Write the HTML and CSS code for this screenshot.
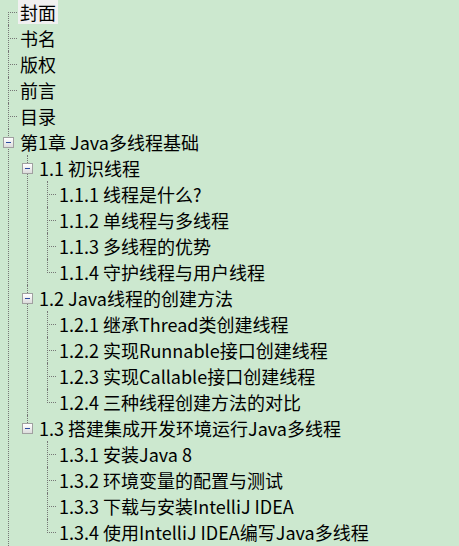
FILE: index.html
```html
<!DOCTYPE html>
<html lang="zh-CN">
<head>
    <meta charset="UTF-8">
    <meta name="viewport" content="width=device-width, initial-scale=1.0">
    <title>目录树</title>
    <link rel="stylesheet" href="styles.css">
</head>
<body>
    <ul class="tree">
        <li><div class="row leaf"><span class="label selected">封面</span></div></li>
        <li><div class="row leaf"><span class="label">书名</span></div></li>
        <li><div class="row leaf"><span class="label">版权</span></div></li>
        <li><div class="row leaf"><span class="label">前言</span></div></li>
        <li><div class="row leaf"><span class="label">目录</span></div></li>
        <li class="more">
            <div class="row"><span class="box"></span><span class="label">第1章 Java多线程基础</span></div>
            <ul class="sub">
                <li>
                    <div class="row"><span class="box"></span><span class="label">1.1 初识线程</span></div>
                    <ul class="sub deep">
                        <li><div class="row leaf"><span class="label">1.1.1 线程是什么?</span></div></li>
                        <li><div class="row leaf"><span class="label">1.1.2 单线程与多线程</span></div></li>
                        <li><div class="row leaf"><span class="label">1.1.3 多线程的优势</span></div></li>
                        <li><div class="row leaf"><span class="label">1.1.4 守护线程与用户线程</span></div></li>
                    </ul>
                </li>
                <li>
                    <div class="row"><span class="box"></span><span class="label">1.2 Java线程的创建方法</span></div>
                    <ul class="sub deep">
                        <li><div class="row leaf"><span class="label">1.2.1 继承Thread类创建线程</span></div></li>
                        <li><div class="row leaf"><span class="label">1.2.2 实现Runnable接口创建线程</span></div></li>
                        <li><div class="row leaf"><span class="label">1.2.3 实现Callable接口创建线程</span></div></li>
                        <li><div class="row leaf"><span class="label">1.2.4 三种线程创建方法的对比</span></div></li>
                    </ul>
                </li>
                <li>
                    <div class="row"><span class="box"></span><span class="label">1.3 搭建集成开发环境运行Java多线程</span></div>
                    <ul class="sub deep">
                        <li><div class="row leaf"><span class="label">1.3.1 安装Java 8</span></div></li>
                        <li><div class="row leaf"><span class="label">1.3.2 环境变量的配置与测试</span></div></li>
                        <li><div class="row leaf"><span class="label">1.3.3 下载与安装IntelliJ IDEA</span></div></li>
                        <li><div class="row leaf"><span class="label">1.3.4 使用IntelliJ IDEA编写Java多线程</span></div></li>
                    </ul>
                </li>
            </ul>
        </li>
    </ul>
</body>
</html>
```

FILE: styles.css
```css
html, body {
    margin: 0;
    padding: 0;
    background: #cce8cf;
}
body {
    height: 546px;
    overflow: hidden;
    font-family: "Microsoft YaHei", "Noto Sans CJK SC", sans-serif;
    font-size: 18px;
    color: #000;
}
.tree, .sub {
    list-style: none;
    margin: 0;
    padding: 0;
}
.tree {
    margin-top: -1px;
}
.sub {
    margin-left: 19px;
}
.sub.deep {
    margin-left: 20px;
}
.tree li {
    position: relative;
}
/* vertical connector */
.tree li::before {
    content: "";
    position: absolute;
    left: 8px;
    top: 0;
    bottom: 0;
    border-left: 1px dotted #767676;
}
.tree > li:first-child::before {
    top: 13px;
}
.tree li:last-child::before {
    bottom: auto;
    height: 14px;
}
/* more chapters follow below the fold */
.tree > li.more::before {
    bottom: -1px;
    height: auto;
}
.row {
    position: relative;
    display: flex;
    align-items: center;
    height: 26px;
    padding-left: 3px;
    z-index: 1;
}
.row.leaf {
    padding-left: 18px;
}
/* horizontal connector */
.row.leaf::before {
    content: "";
    position: absolute;
    left: 8px;
    top: 13px;
    width: 9px;
    border-top: 1px dotted #767676;
}
.box {
    position: relative;
    width: 9px;
    height: 9px;
    margin-right: 4px;
    border: 1px solid #a0a0a0;
    background: linear-gradient(#ffffff, #dcdcdc);
    flex: none;
}
.box::after {
    content: "";
    position: absolute;
    left: 2px;
    top: 4px;
    width: 5px;
    height: 1px;
    background: #2a4da0;
}
.label {
    display: inline-block;
    line-height: 24px;
    height: 24px;
    padding: 0 2px;
    white-space: nowrap;
}
.label.selected {
    background: #f0f0f0;
}
```
